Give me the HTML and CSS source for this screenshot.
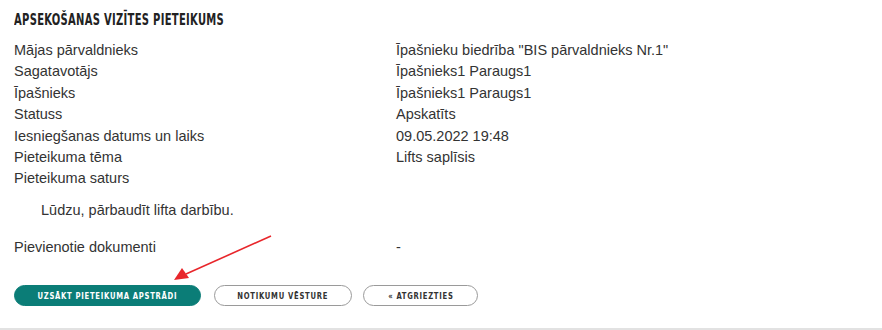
FILE: index.html
```html
<!DOCTYPE html>
<html lang="lv">
<head>
<meta charset="utf-8">
<link rel="stylesheet" href="styles.css">
</head>
<body>
<div class="panel">
  <h1 class="title">Apsekošanas vizītes pieteikums</h1>
  <div class="rows">
    <div class="row"><span class="label">Mājas pārvaldnieks</span><span class="value">Īpašnieku biedrība "BIS pārvaldnieks Nr.1"</span></div>
    <div class="row"><span class="label">Sagatavotājs</span><span class="value">Īpašnieks1 Paraugs1</span></div>
    <div class="row"><span class="label">Īpašnieks</span><span class="value">Īpašnieks1 Paraugs1</span></div>
    <div class="row"><span class="label">Statuss</span><span class="value">Apskatīts</span></div>
    <div class="row"><span class="label">Iesniegšanas datums un laiks</span><span class="value">09.05.2022 19:48</span></div>
    <div class="row"><span class="label">Pieteikuma tēma</span><span class="value">Lifts saplīsis</span></div>
    <div class="row"><span class="label">Pieteikuma saturs</span><span class="value"></span></div>
  </div>
  <p class="content">Lūdzu, pārbaudīt lifta darbību.</p>
  <div class="row docs"><span class="label">Pievienotie dokumenti</span><span class="value">-</span></div>
  <div class="actions">
    <button class="btn btn-primary"><span class="btn-text">Uzsākt pieteikuma apstrādi</span></button>
    <button class="btn btn-outline btn-history"><span class="btn-text">Notikumu vēsture</span></button>
    <button class="btn btn-outline btn-back"><span class="btn-text">« Atgriezties</span></button>
  </div>
  <svg class="arrow" width="882" height="330" viewBox="0 0 882 330">
    <line x1="271" y1="236" x2="186" y2="274" stroke="#e8262b" stroke-width="1.6"/>
    <polygon points="174,280 182,268 189,278" fill="#e8262b"/>
  </svg>
</div>
</body>
</html>
```

FILE: styles.css
```css
* { box-sizing: border-box; }
html, body { margin: 0; padding: 0; background: #fff; }
body {
  font-family: "Liberation Sans", Arial, sans-serif;
  font-size: 14.5px;
  color: #333;
}
.panel {
  position: relative;
  width: 882px;
  height: 330px;
  padding: 11px 14px 0 14px;
  border-bottom: 2px solid #e2e2e2;
}
.title {
  margin: 0;
  font-family: "DejaVu Sans Condensed", "DejaVu Sans", sans-serif;
  font-stretch: condensed;
  font-weight: bold;
  font-size: 15px;
  line-height: 18px;
  letter-spacing: 0.4px;
  text-transform: uppercase;
  color: #222;
  white-space: nowrap;
  transform: scaleX(0.74);
  transform-origin: left center;
}
.rows { margin-top: 11px; }
.row {
  display: flex;
  line-height: 21.4px;
  height: 21.4px;
}
.label { width: 382px; flex: none; }
.value { flex: 1; }
.content {
  margin: 10px 0 0 27px;
  line-height: 21px;
}
.docs { margin-top: 16px; }
.actions {
  display: flex;
  gap: 13px;
  margin-top: 27px;
}
.btn {
  display: flex;
  align-items: center;
  justify-content: center;
  height: 21px;
  border-radius: 11px;
  padding: 0;
  cursor: pointer;
  overflow: visible;
}
.btn-text {
  display: inline-block;
  font-family: "DejaVu Sans Condensed", "DejaVu Sans", sans-serif;
  font-stretch: condensed;
  font-weight: bold;
  font-size: 9.5px;
  letter-spacing: 0.9px;
  white-space: nowrap;
  text-transform: uppercase;
  transform: scaleX(0.8);
}
.btn-primary {
  width: 187px;
  background: #0b7d77;
  color: #fff;
  border: 1px solid #0b7d77;
}
.btn-outline {
  background: #fff;
  color: #333;
  border: 1px solid #9a9a9a;
}
.btn-history { width: 138px; }
.btn-back { width: 115px; margin-left: -2px; }
.arrow {
  position: absolute;
  left: 0;
  top: 0;
  pointer-events: none;
}
```
